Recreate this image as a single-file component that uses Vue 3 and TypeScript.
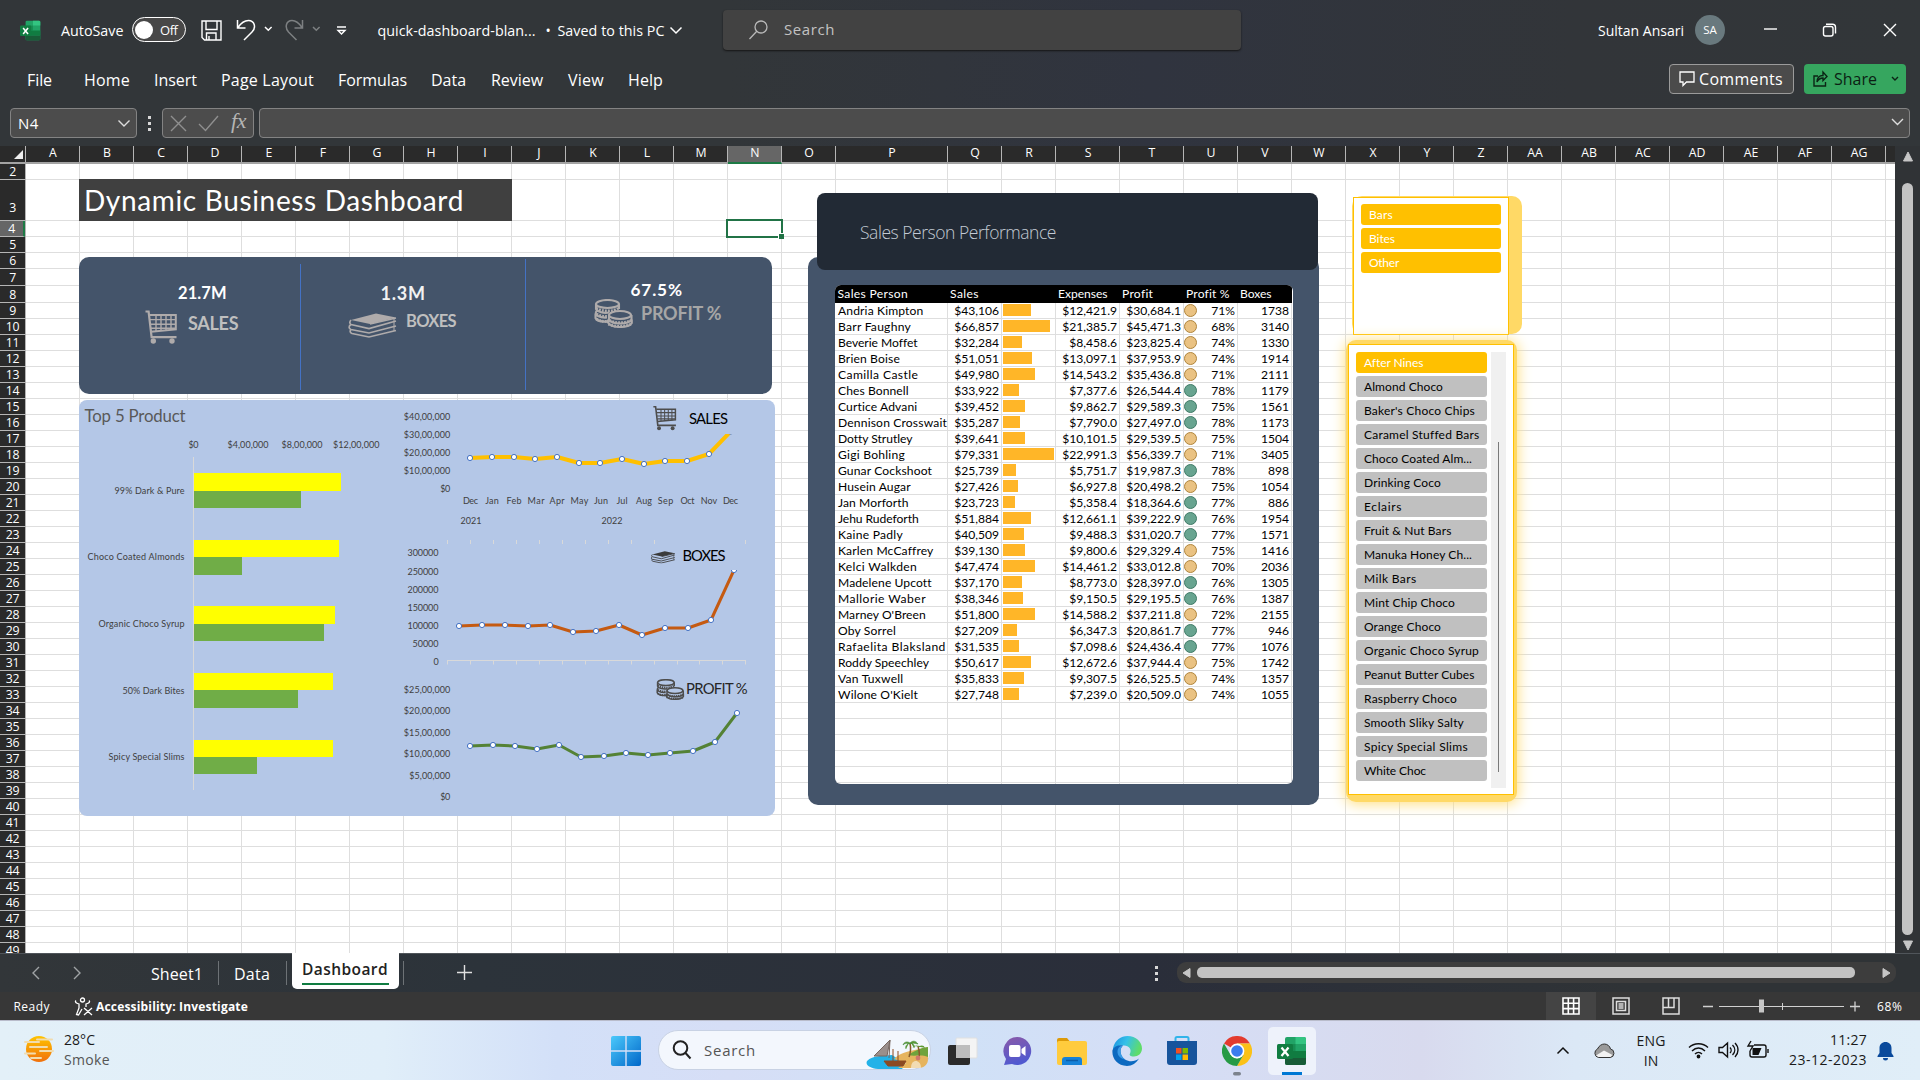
<script setup lang="ts">
type FitEl = HTMLElement

// Spreads the letters of a label so that it takes the given width.
const vFit = {
  mounted(el: FitEl, binding: { value: number }) {
    const count = (el.textContent ?? '').trim().length
    if (!count) return
    const natural = el.getBoundingClientRect().width
    el.style.letterSpacing = `${(binding.value - natural) / count}px`
  },
}

interface Column { name: string; width: number }
const wide: Record<string, number> = { P: 112, S: 64, T: 64 }
const columnNames = 'A B C D E F G H I J K L M N O P Q R S T U V W X Y Z AA AB AC AD AE AF AG'.split(' ')
const columns: Column[] = columnNames.map((name) => ({ name, width: wide[name] ?? 54 }))

const rowHeights: Record<number, number> = { 3: 41, 7: 17, 8: 17, 49: 11 }
const rows = Array.from({ length: 48 }, (_, i) => ({ n: i + 2, height: rowHeights[i + 2] ?? 16 }))

const columnLines: number[] = []
columns.reduce((x, c) => { columnLines.push(x + c.width - 0.5); return x + c.width }, 26)
const rowLines: number[] = []
rows.slice(0, -1).reduce((y, r) => { rowLines.push(y + r.height - 0.5); return y + r.height }, 18)

const menus: [string, number, number][] = [
  ['File', 25, 0], ['Home', 46, 32], ['Insert', 43, 24], ['Page Layout', 93, 24], ['Formulas', 69, 24],
  ['Data', 35, 24], ['Review', 52, 25], ['View', 36, 25], ['Help', 35, 24],
]

interface Person {
  name: string; w: number; sales: string; bar: number; expenses: string; profit: string; pct: number; boxes: number; good: boolean
}
const people: Person[] = ([
  ['Andria Kimpton', 85.4, '$43,106', 28, '$12,421.9', '$30,684.1', 71, 1738, 0],
  ['Barr Faughny', 73, '$66,857', 47, '$21,385.7', '$45,471.3', 68, 3140, 0],
  ['Beverie Moffet', 79.2, '$32,284', 19, '$8,458.6', '$23,825.4', 74, 1330, 0],
  ['Brien Boise', 62, '$51,051', 29, '$13,097.1', '$37,953.9', 74, 1914, 0],
  ['Camilla Castle', 80.2, '$49,980', 32, '$14,543.2', '$35,436.8', 71, 2111, 0],
  ['Ches Bonnell', 70.6, '$33,922', 16, '$7,377.6', '$26,544.4', 78, 1179, 1],
  ['Curtice Advani', 79.5, '$39,452', 22, '$9,862.7', '$29,589.3', 75, 1561, 1],
  ['Dennison Crosswait', 109, '$35,287', 17, '$7,790.0', '$27,497.0', 78, 1173, 1],
  ['Dotty Strutley', 74, '$39,641', 22, '$10,101.5', '$29,539.5', 75, 1504, 0],
  ['Gigi Bohling', 67, '$79,331', 51, '$22,991.3', '$56,339.7', 71, 3405, 0],
  ['Gunar Cockshoot', 94, '$25,739', 13, '$5,751.7', '$19,987.3', 78, 898, 1],
  ['Husein Augar', 72.7, '$27,426', 15, '$6,927.8', '$20,498.2', 75, 1054, 0],
  ['Jan Morforth', 70.6, '$23,723', 12, '$5,358.4', '$18,364.6', 77, 886, 1],
  ['Jehu Rudeforth', 80.6, '$51,884', 28, '$12,661.1', '$39,222.9', 76, 1954, 1],
  ['Kaine Padly', 65, '$40,509', 21, '$9,488.3', '$31,020.7', 77, 1571, 1],
  ['Karlen McCaffrey', 95, '$39,130', 22, '$9,800.6', '$29,329.4', 75, 1416, 0],
  ['Kelci Walkden', 79, '$47,474', 32, '$14,461.2', '$33,012.8', 70, 2036, 0],
  ['Madelene Upcott', 93.3, '$37,170', 19, '$8,773.0', '$28,397.0', 76, 1305, 1],
  ['Mallorie Waber', 88, '$38,346', 20, '$9,150.5', '$29,195.5', 76, 1387, 1],
  ["Marney O'Breen", 87.8, '$51,800', 32, '$14,588.2', '$37,211.8', 72, 2155, 0],
  ['Oby Sorrel', 58, '$27,209', 14, '$6,347.3', '$20,861.7', 77, 946, 1],
  ['Rafaelita Blaksland', 107.8, '$31,535', 16, '$7,098.6', '$24,436.4', 77, 1076, 1],
  ['Roddy Speechley', 91, '$50,617', 28, '$12,672.6', '$37,944.4', 75, 1742, 0],
  ['Van Tuxwell', 65.4, '$35,833', 21, '$9,307.5', '$26,525.5', 74, 1357, 0],
  ["Wilone O'Kielt", 80, '$27,748', 16, '$7,239.0', '$20,509.0', 74, 1055, 0],
] as [string, number, string, number, string, string, number, number, number][]).map(
  ([name, w, sales, bar, expenses, profit, pct, boxes, good]) => ({ name, w, sales, bar, expenses, profit, pct, boxes, good: !!good }),
)

const categories: [string, number][] = [['Bars', 24], ['Bites', 26], ['Other', 30]]
const products: [string, number][] = [
  ['After Nines', 59], ['Almond Choco', 79], ["Baker's Choco Chips", 111], ['Caramel Stuffed Bars', 115],
  ['Choco Coated Alm...', 108], ['Drinking Coco', 77], ['Eclairs', 38], ['Fruit & Nut Bars', 87.5],
  ['Manuka Honey Ch...', 108], ['Milk Bars', 52.5], ['Mint Chip Choco', 91], ['Orange Choco', 77],
  ['Organic Choco Syrup', 115], ['Peanut Butter Cubes', 110], ['Raspberry Choco', 93],
  ['Smooth Sliky Salty', 100], ['Spicy Special Slims', 104], ['White Choc', 62],
]

const topProducts = [
  { label: '99% Dark & Pure', w: 70, base: 494, y: 473, mid: 491, end: 508, a: 147, b: 107 },
  { label: 'Choco Coated Almonds', w: 97, base: 560, y: 540, mid: 557, end: 575, a: 145, b: 48 },
  { label: 'Organic Choco Syrup', w: 86, base: 627, y: 606, mid: 624, end: 641, a: 141, b: 130 },
  { label: '50% Dark Bites', w: 62, base: 694, y: 673, mid: 690, end: 708, a: 139, b: 104 },
  { label: 'Spicy Special Slims', w: 76, base: 760, y: 740, mid: 757, end: 774, a: 139, b: 63 },
]
const moneyAxis: [string, number, number][] = [['$0', 188.5, 10], ['$4,00,000', 227.5, 41], ['$8,00,000', 281.5, 41], ['$12,00,000', 333, 46.5]]

interface AxisLabel { t: string; x: number; y: number; w: number }
const axis = (items: [string, number, number][], right: number): AxisLabel[] =>
  items.map(([t, y, w]) => ({ t, x: right - w, y: y + 3.6, w }))
const axisLabels: AxisLabel[] = [
  ...axis([['$40,00,000', 416, 46.5], ['$30,00,000', 434, 46.5], ['$20,00,000', 452, 46.5], ['$10,00,000', 470, 46.5], ['$0', 488, 10]], 450.3),
  ...axis([['300000', 552, 31], ['250000', 571, 31], ['200000', 589, 31], ['150000', 607, 31], ['100000', 625, 31], ['50000', 643, 26], ['0', 661, 5]], 438.5),
  ...axis([['$25,00,000', 689, 46.5], ['$20,00,000', 710, 46.5], ['$15,00,000', 732, 46.5], ['$10,00,000', 753, 46.5], ['$5,00,000', 775, 41], ['$0', 796, 10]], 450.3),
]
const months: [string, number, number][] = [
  ['Dec', 470.5, 15], ['Jan', 492, 13.5], ['Feb', 514, 15], ['Mar', 536, 17], ['Apr', 557, 15], ['May', 579.5, 18], ['Jun', 601, 14],
  ['Jul', 622, 11], ['Aug', 644, 16], ['Sep', 665.5, 15.5], ['Oct', 687.5, 14], ['Nov', 709, 16.5], ['Dec', 730.5, 15],
]

type Point = [number, number]
interface Series { color: string; width: number; clip: string; points: Point[] }
const series: Series[] = [
  { color: '#ffc000', width: 4, clip: 'url(#clip-sales)', points: [[470, 458], [492, 457], [514, 457], [535, 459], [557, 457], [579, 463], [600, 463], [622, 459], [644, 464], [665, 461], [687, 461], [709, 454], [730.5, 431.6]] },
  { color: '#c55a11', width: 3, clip: 'url(#clip-boxes)', points: [[459, 626], [482, 625], [505, 625], [528, 626], [550, 625], [573, 632], [596, 631], [619, 625], [642, 635], [665, 628], [688, 628], [711, 620], [734, 570]] },
  { color: '#548235', width: 3, clip: 'url(#clip-profit)', points: [[470, 746], [493, 745], [515, 746], [537, 749], [559, 745], [581, 757], [604, 756], [626, 753], [648, 755], [670, 753], [693, 751], [715, 742], [737, 713]] },
]
const pts = (s: Series): string => s.points.map((p) => p.join(',')).join(' ')
const boxTicks = [447.5, 470.5, 493.5, 516.5, 539.5, 562.5, 585.5, 608.5, 631.5, 654.5, 677.5, 699.5, 722.5, 745.5]
const topTicks = boxTicks.filter((_, i) => i < 10 || i === 13)
</script>

<template>
  <div class="screen">
    <svg class="defs" width="0" height="0" aria-hidden="true">
      <defs>
        <symbol id="cart" viewBox="0 0 33 34">
          <g fill="none" stroke="currentColor">
            <path d="M.5 1.5H3.6L6.6 27.2H31.5" stroke-width="2.2" />
            <path d="M4.6 5H30.8V19.4L6 21.8" stroke-width="2" />
            <path d="M5 9.6H31M5.5 14.2H31M6 18.2H31M11 5v16M16 5v15.6M21 5v15.2M26 5v15" stroke-width="1.4" />
          </g>
          <circle cx="8.3" cy="31" r="2.7" fill="currentColor" /><circle cx="27" cy="31" r="2.7" fill="currentColor" />
        </symbol>
        <symbol id="books" viewBox="0 0 49 25">
          <path d="M3 7 28 .5 48 4.5 22 11z" fill="currentColor" />
          <g fill="none" stroke="currentColor" stroke-width="1.7">
            <path d="M3 7C1.400 8.500 1.500 10.500 3 11.500L21 15.500 48 8M22 11l26-6M3 11.500C.5 13 .5 15.500 3 16.500L21 20 48 13M3 16.500C1.500 18 2 19.500 4 20.500L21 24 48 17.500" />
            <path d="M46 5v3M46 9v4.500M46 14v4" stroke-width="1" />
          </g>
        </symbol>
        <symbol id="coins" viewBox="0 0 38 29">
          <g fill="none" stroke="currentColor" stroke-width="2.1">
            <ellipse cx="13" cy="5" rx="11.500" ry="4" />
            <path d="M1.500 5v5c1.500 3 8 4.500 13 3.500M24.500 5v5M2.500 11.500c-2 2-1.500 4 1 5.500 3 1.500 6 1.800 9 1.500M1 14.500v4.500c1 2.500 6 4 12 3.500" />
            <ellipse cx="25.500" cy="16" rx="11" ry="4" />
            <path d="M14.500 16v4.500c2 3.500 8 4 11 4s9.500-.5 11.500-4V16M13.500 20.500v3c2 3.500 8 4.500 12 4.500s10-.8 11.800-4v-3.500" />
          </g>
          <g fill="none" stroke="currentColor" stroke-dasharray="1.800 1.200">
            <path d="M2 9c5 4 18 4 22 0M2 20c3 2 6 2.500 11 2.500M2 15c3 2 7 2.500 11 2.500" stroke-width="2.800" />
            <path d="M15 21.500c5 3 16 3 21.500 0M14 25c5 3 18 3 23 0" stroke-width="2.800" />
          </g>
        </symbol>
        <symbol id="excel" viewBox="0 0 30 30">
          <rect x="8" y="1" width="21" height="28" rx="2" fill="#21a366" />
          <path d="M18.500 1H27a2 2 0 0 1 2 2v5H18.500z" fill="#33c481" />
          <path d="M8 8h10.500v7H8z" fill="#107c41" opacity=".55" /><path d="M8 15h21v7H8z" fill="#107c41" />
          <path d="M8 22h21v5a2 2 0 0 1-2 2H10a2 2 0 0 1-2-2z" fill="#185c37" />
          <rect x="0" y="8" width="16" height="15" rx="1.500" fill="#107c41" />
          <path d="M4.500 11.500l7 8.500M11.500 11.500l-7 8.500" stroke="#fff" stroke-width="2.200" />
        </symbol>
      </defs>
    </svg>

    <div class="chrome">
      <header class="titlebar">
        <div class="group quick">
          <svg class="logo" width="21" height="21"><use href="#excel" width="21" height="21" /></svg>
          <span v-fit="62.500" class="t autosave">AutoSave</span>
          <span class="toggle"><i class="knob" /><span v-fit="17.500" class="t off">Off</span></span>
          <svg class="save" width="21" height="21" viewBox="0 0 21 21" fill="none" stroke="#fff" stroke-width="1.400"><path d="M1 1h19v19H3.500L1 17.500zM5 1v8.500h11V1M5.500 20v-7H15v7M8 16v4" /></svg>
          <svg class="undo" width="38" height="24" viewBox="0 0 38 24" fill="none" stroke="#fff" stroke-width="1.500"><path d="M1.500 2v8h8M2 9.500C5 5 9 2.500 12.500 2.500c6 0 8 7 3.500 11.500l-8 8" /><path d="M29 9l3.300 3.300L35.600 9" /></svg>
          <svg class="redo" width="38" height="24" viewBox="0 0 38 24" fill="none" stroke="#7d8082" stroke-width="1.500"><path d="M17.500 2v8h-8M17 9.500C14 5 10 2.500 7 2.500c-6 0-7.500 7-3.500 11.500l8 8" /><path d="M28 9l3.300 3.300L34.600 9" /></svg>
          <svg class="custom" width="11" height="12" viewBox="0 0 11 12" fill="none" stroke="#fff" stroke-width="1.400"><path d="M1 2h9M2 5.500h7L5.500 9z" /></svg>
          <span v-fit="158" class="t fname">quick-dashboard-blan...</span>
          <span class="t bullet">•</span>
          <span v-fit="107" class="t saved">Saved to this PC</span>
          <svg class="savedchev" width="14" height="9" viewBox="0 0 14 9" fill="none" stroke="#fff" stroke-width="1.500"><path d="M1.500 1.500 7 7l5.500-5.500" /></svg>
        </div>
        <div class="tsearch">
          <svg width="22" height="22" viewBox="0 0 22 22" fill="none" stroke="#b9b9b9" stroke-width="1.300"><circle cx="13" cy="8" r="6" /><path d="M8.800 12.300 1.500 20" /></svg>
          <span v-fit="51" class="t">Search</span>
        </div>
        <div class="group user">
          <span v-fit="86" class="t">Sultan Ansari</span>
          <span class="avatar">SA</span>
          <svg class="win" width="136" height="16" viewBox="0 0 136 16" fill="none" stroke="#fff" stroke-width="1.400"><path d="M1 7h13" /><rect x="60.500" y="4.500" width="9.500" height="9.500" rx="2" /><path d="M63 2.200h6.500a3 3 0 0 1 3 3V11.500M121 2l12 12M133 2l-12 12" /></svg>
        </div>
      </header>

      <nav class="ribbon">
        <span v-for="[name, w, gap] in menus" :key="name" v-fit="w" class="t menu" :style="{ marginLeft: gap + 'px' }">{{ name }}</span>
        <button class="btn comments">
          <svg width="16" height="17" viewBox="0 0 16 17" fill="none" stroke="#fff" stroke-width="1.300"><path d="M1 2h14v10H7.500L4 15.500V12H1z" /></svg>
          <span v-fit="84" class="t">Comments</span>
        </button>
        <button class="btn share">
          <svg width="15" height="17" viewBox="0 0 15 17" fill="none" stroke="#0b2415" stroke-width="1.400"><path d="M5 6H1v10h11.500v-4M4 12c0-4 2-6.500 6-6.500V2l4 4.500-4 4V8c-3 0-4.500 1-6 4z" /></svg>
          <span v-fit="43" class="t">Share</span>
          <svg class="sc" width="8" height="6" viewBox="0 0 8 6" fill="none" stroke="#0b2415" stroke-width="1.400"><path d="M1 1l3 3 3-3" /></svg>
        </button>
      </nav>

      <div class="formula">
        <div class="fbox namebox"><span v-fit="21" class="t">N4</span><svg width="14" height="9" viewBox="0 0 14 9" fill="none" stroke="#ddd" stroke-width="1.400"><path d="M1.500 1.500 7 7l5.500-5.500" /></svg></div>
        <span class="dots"><i /><i /><i /></span>
        <div class="fbox fx">
          <svg width="92" height="28" viewBox="0 0 92 28" fill="none" stroke="#8f8f8f" stroke-width="1.400"><path d="M8 7l15 15M23 7 8 22M36 15l6.500 6.500L55 7" /></svg>
          <span class="fxt">fx</span>
        </div>
        <div class="fbox finput"><svg width="13" height="8" viewBox="0 0 13 8" fill="none" stroke="#ddd" stroke-width="1.400"><path d="M1 1l5.500 5.500L12 1" /></svg></div>
      </div>
    </div>

    <main class="sheet">
      <div class="colhead">
        <span class="corner"><svg width="9" height="9"><path d="M9 0v9H0z" fill="#eee" /></svg></span>
        <span v-for="c in columns" :key="c.name" class="col" :class="{ on: c.name === 'N' }" :style="{ width: c.width + 'px' }">{{ c.name }}</span>
      </div>
      <div class="rowhead">
        <span v-for="r in rows" :key="r.n" class="row" :class="{ on: r.n === 4 }" :style="{ height: r.height + 'px' }"><b>{{ r.n }}</b></span>
      </div>
      <svg class="lines" width="1895" height="807" viewBox="0 0 1895 807" stroke="#dedede">
        <line v-for="x in columnLines" :key="'c' + x" :x1="x" :x2="x" y1="18" y2="807" />
        <line v-for="y in rowLines" :key="'r' + y" x1="26" x2="1895" :y1="y" :y2="y" />
      </svg>

      <h1 class="title"><span v-fit="380">Dynamic Business Dashboard</span></h1>
      <div class="selected"><i /></div>

      <svg class="kpis" width="693" height="137" viewBox="79 257 693 137">
        <rect x="79" y="257" width="693" height="137" rx="10" fill="#44546a" />
        <path d="M300.500 264v126M525.500 259v131" stroke="#4472c4" />
        <g font-weight="700" fill="#fff">
          <text x="178" y="299.300" font-size="16.500" textLength="48.500">21.7M</text>
          <text x="380.500" y="300" font-size="18" textLength="44.500" fill="#f2f2f2">1.3M</text>
          <text x="630.500" y="296.300" font-size="17.200" textLength="51.500">67.5%</text>
          <text x="188" y="330" font-size="18" textLength="50.500" fill="#bfbfbf">SALES</text>
          <text x="406" y="327.300" font-size="16.500" textLength="50.500" fill="#bfbfbf">BOXES</text>
          <text x="641" y="320" font-size="18" textLength="80.500" fill="#a6a6a6">PROFIT %</text>
        </g>
        <g color="#afabab">
          <use href="#cart" x="145" y="310" width="33" height="34" />
          <use href="#books" x="348" y="313" width="49" height="25" />
          <use href="#coins" x="594" y="299" width="39" height="29" />
        </g>
      </svg>

      <svg class="charts" width="696" height="416" viewBox="79 400 696 416">
        <defs>
          <clipPath id="clip-sales"><rect x="450" y="434" width="300" height="60" /></clipPath>
          <clipPath id="clip-boxes"><rect x="440" y="570" width="310" height="90" /></clipPath>
          <clipPath id="clip-profit"><rect x="450" y="690" width="300" height="110" /></clipPath>
        </defs>
        <rect x="79" y="400" width="696" height="416" rx="8" fill="#b4c7e7" />
        <text x="84.500" y="422.300" font-size="16.800" textLength="101" fill="#595959">Top 5 Product</text>
        <g font-size="9" fill="#404040">
          <text v-for="[t, x, w] in moneyAxis" :key="t" :x="x" y="447.600" :textLength="w">{{ t }}</text>
          <text v-for="p in topProducts" :key="p.label" :x="184.500 - p.w" :y="p.base" :textLength="p.w">{{ p.label }}</text>
          <text v-for="a in axisLabels" :key="a.t + a.y" :x="a.x" :y="a.y" :textLength="a.w">{{ a.t }}</text>
          <text v-for="[t, x, w] in months" :key="t + x" :x="x - w / 2" y="504" :textLength="w">{{ t }}</text>
          <text x="460.500" y="524" textLength="21">2021</text>
          <text x="601.500" y="524" textLength="21">2022</text>
        </g>
        <path d="M193.500 457v333" stroke="#d9d9d9" />
        <g v-for="p in topProducts" :key="p.y">
          <rect x="194" :y="p.y" :width="p.a" :height="p.mid - p.y" fill="#ffff00" />
          <rect x="194" :y="p.mid" :width="p.b" :height="p.end - p.mid" fill="#70ad47" />
        </g>
        <g stroke="#d9d9d9">
          <path d="M447 660.500h299" />
          <path v-for="x in boxTicks" :key="x" :d="`M${x} 661v3.500`" />
          <path v-for="x in topTicks" :key="'t' + x" :d="`M${x} 540v4`" />
        </g>
        <g v-for="s in series" :key="s.color" :clip-path="s.clip">
          <polyline :points="pts(s)" fill="none" :stroke="s.color" :stroke-width="s.width" stroke-linejoin="round" />
          <circle v-for="p in s.points" :key="p[0]" :cx="p[0]" :cy="p[1]" r="2.600" fill="#fff" stroke="#4472c4" />
        </g>
        <g color="#4d4d4d">
          <use href="#cart" x="653" y="405" width="24" height="26" />
          <use href="#books" x="650" y="551" width="26" height="12.500" color="#3b3b3b" />
          <use href="#coins" x="656" y="679" width="28.500" height="21" />
        </g>
        <g font-size="14.800">
          <text x="689" y="424.300" textLength="39">SALES</text>
          <text x="682.500" y="560.500" textLength="43">BOXES</text>
          <text x="686" y="694.300" textLength="61.500" fill="#262626">PROFIT %</text>
        </g>
      </svg>

      <section class="perf">
        <div class="table">
          <div class="tr th">
            <span class="name"><i v-fit="70.500">Sales Person</i></span><span class="sales"><i v-fit="29">Sales</i></span><span class="exp"><i v-fit="49.500">Expenses</i></span>
            <span class="prof"><i v-fit="31">Profit</i></span><span class="pct"><i v-fit="43.500">Profit %</i></span><span class="box"><i v-fit="31.500">Boxes</i></span>
          </div>
          <div v-for="p in people" :key="p.name" class="tr">
            <span class="name"><i v-fit="p.w">{{ p.name }}</i></span>
            <span class="sales">{{ p.sales }}</span>
            <span class="bar"><em :style="{ width: p.bar + 'px' }" /></span>
            <span class="exp">{{ p.expenses }}</span>
            <span class="prof">{{ p.profit }}</span>
            <span class="pct"><u :class="{ good: p.good }" />{{ p.pct }}%</span>
            <span class="box">{{ p.boxes }}</span>
          </div>
          <div v-for="n in 6" :key="n" class="tr">
            <span class="name" /><span class="sales" /><span class="bar" /><span class="exp" /><span class="prof" /><span class="pct" /><span class="box" />
          </div>
        </div>
      </section>
      <div class="perfhead"><span v-fit="196">Sales Person Performance</span></div>

      <div class="slicerback" />
      <div class="slicer one">
        <span v-for="[t, w] in categories" :key="t" class="opt on"><i v-fit="w">{{ t }}</i></span>
      </div>
      <div class="slicerback glow" />
      <div class="slicer two">
        <div class="opts">
          <span v-for="([t, w], i) in products" :key="t" class="opt" :class="{ on: i === 0 }"><i v-fit="w">{{ t }}</i></span>
        </div>
        <div class="track"><i /></div>
      </div>

      <div class="vscroll">
        <svg width="12" height="11"><path d="M6 1l4.500 9h-9z" fill="#c6c6c6" stroke="#c6c6c6" stroke-linejoin="round" /></svg>
        <i />
        <svg width="12" height="11"><path d="M6 10l4.500-9h-9z" fill="#c6c6c6" stroke="#c6c6c6" stroke-linejoin="round" /></svg>
      </div>
    </main>

    <div class="tabs">
      <svg class="arrows" width="52" height="14" viewBox="0 0 52 14" fill="none" stroke="#a0a4a6" stroke-width="1.400"><path d="M8 1 2 7l6 6M43 1l6 6-6 6" /></svg>
      <span v-fit="52" class="t s1">Sheet1</span><i class="sep a" />
      <span v-fit="36" class="t s2">Data</span><i class="sep b" />
      <span class="active"><span v-fit="86" class="t">Dashboard</span></span><i class="sep c" />
      <svg class="plus" width="15" height="15" stroke="#e0e0e0" stroke-width="1.400"><path d="M7.500 0v15M0 7.500h15" /></svg>
      <span class="dots"><i /><i /><i /></span>
      <div class="hscroll">
        <svg width="9" height="12"><path d="M8 1.500v9L1 6z" fill="#c6c6c6" stroke="#c6c6c6" stroke-linejoin="round" /></svg>
        <i />
        <svg width="9" height="12"><path d="M1 1.500v9L8 6z" fill="#c6c6c6" stroke="#c6c6c6" stroke-linejoin="round" /></svg>
      </div>
    </div>

    <div class="status">
      <span v-fit="36.500" class="t ready">Ready</span>
      <svg class="acc" width="19" height="19" viewBox="0 0 19 19" fill="none" stroke="#fff" stroke-width="1.300"><circle cx="8.500" cy="3" r="2" /><path d="M2 3.500c-1.500 1.500 0 2.500 3 3.500v4l-2.500 6.500 2 .5L8 12M15 3.500c1.500 1.500 0 2.500-3 3.500v3M10 11l8 7M18 11l-8 7" /></svg>
      <span v-fit="152" class="t acct">Accessibility: Investigate</span>
      <span class="views">
        <span class="view on"><svg width="18" height="18" viewBox="0 0 18 18" fill="none" stroke="#fff" stroke-width="1.600"><path d="M1 1h16v16H1zM1 6.300h16M1 11.600h16M6.300 1v16M11.600 1v16" /></svg></span>
        <span class="view"><svg width="18" height="18" viewBox="0 0 18 18" fill="none" stroke="#ddd" stroke-width="1.500"><path d="M1 1h16v16H1zM4.500 4.500h9v9h-9zM6.500 7h5M6.500 9h5M6.500 11h5" /></svg></span>
        <span class="view"><svg width="18" height="18" viewBox="0 0 18 18" fill="none" stroke="#ddd" stroke-width="1.500"><path d="M1 1h16v16H1zM1 10.500h11V1M6.500 1v9.500" /></svg></span>
      </span>
      <svg class="zoom" width="158" height="18" viewBox="0 0 158 18" stroke="#d0d0d0"><path d="M1 9.500h10M148 9.500h10M153 4.500v10" stroke-width="1.300" /><path d="M17 9.500h125M80.500 6v7" /><rect x="57" y="2.500" width="5" height="13" fill="#c6c6c6" stroke="none" /></svg>
      <span v-fit="25.500" class="t pctz">68%</span>
    </div>

    <footer class="taskbar">
      <svg class="weather" width="30" height="30" viewBox="0 0 30 30"><defs><linearGradient id="sun" x1="0" y1="0" x2="0" y2="1"><stop offset="0" stop-color="#ffc400" /><stop offset="1" stop-color="#f0700c" /></linearGradient></defs><circle cx="15" cy="15" r="13" fill="url(#sun)" /><path d="M1 8h14M13 5.500h15M6 13h17M1 19.500h10M16 17h13M7 24h10" stroke="#f1dcae" stroke-width="2" stroke-linecap="round" /></svg>
      <div class="wtext"><span v-fit="31" class="t">28°C</span><span v-fit="46" class="t smoke">Smoke</span></div>
      <svg class="windows" width="30" height="30" viewBox="0 0 30 30"><defs><linearGradient id="win" x1="0" y1="0" x2="1" y2="1"><stop offset="0" stop-color="#4cc9fb" /><stop offset="1" stop-color="#0067c9" /></linearGradient></defs><path d="M2 0h12.300v14.300H0V2a2 2 0 0 1 2-2zM15.700 0H28a2 2 0 0 1 2 2v12.300H15.700zM0 15.700h14.300V30H2a2 2 0 0 1-2-2zM15.700 15.700H30V28a2 2 0 0 1-2 2H15.700z" fill="url(#win)" /></svg>
      <div class="wsearch">
        <svg width="20" height="20" viewBox="0 0 20 20" fill="none" stroke="#222" stroke-width="2"><circle cx="8.500" cy="8" r="6.800" /><path d="M13.500 13l5 5.500" /></svg>
        <span v-fit="52" class="t">Search</span>
        <svg class="beach" width="63" height="32" viewBox="0 0 63 32"><path d="M1 24c6-6 16-5 25-6l14 9-4 5H12C4 31-1 28 1 24z" fill="#22b2e8" /><path d="M28 22c8-8 18-8 34-12v12c0 5-3 8-8 9H32l8-5z" fill="#e6b45e" /><path d="M42 18c6-4 12-7 20-8v10c-7-3-13 0-20-2z" fill="#6fa33c" /><path d="M24 3 8 19h13zM24 3l-1 18" fill="#9a8f8c" stroke="#76665f" /><path d="M18 24h22l-3 5H22zM27 12v12M32 14v10" fill="#8b4a22" stroke="#8b4a22" /><path d="M43 20c2-5 2-9 1-14M53 20c1-4 0-7-1-11" fill="none" stroke="#8a5a2a" stroke-width="1.500" /><path d="M37 8c1-3 4-4 7-2 3-3 6-2 8 1-4-1-5-1-8 0-3-1-5-1-7 1zM43 6c-3 2-4 4-3 6M45 6c3 1 4 3 3 5" fill="#5f9a34" stroke="#3f8a35" stroke-width=".6" /><path d="M46 11c2-3 5-3 7-2 3-1 5-1 6 2-3-1-4-1-6-1-2-1-5-1-7 1z" fill="#5f9a34" /><path d="M45 31c0-6 3-7 5-7s5 2 5 7z" fill="#f2dcb2" /><circle cx="52" cy="21" r="2.400" fill="#d0776b" /></svg>
      </div>
      <div class="apps">
        <svg width="30" height="30" viewBox="0 0 30 30"><rect x="8" y="2" width="21" height="20" rx="1" fill="#f4f4f4" stroke="#e0e0e0" /><rect x="0" y="9" width="22" height="20" rx="2" fill="#2b2b2b" /><path d="M8 9h14v13H8z" fill="#bdbdbd" /></svg>
        <svg width="30" height="30" viewBox="0 0 30 30"><defs><linearGradient id="chat" x1="0" y1="0" x2=".3" y2="1"><stop offset="0" stop-color="#8b5aa8" /><stop offset="1" stop-color="#5059d0" /></linearGradient></defs><path d="M15 1a14 14 0 1 1-5 27l-8 1 2-6A14 14 0 0 1 15 1z" fill="url(#chat)" /><rect x="7" y="9" width="11.500" height="12" rx="2" fill="#fff" /><path d="M19.500 13l4-3v10l-4-3z" fill="#fff" /></svg>
        <svg width="30" height="30" viewBox="0 0 30 30"><path d="M0 4a2 2 0 0 1 2-2h8l3 3.500V12H0z" fill="#dd9a08" /><rect x="0" y="5" width="30" height="24" rx="2" fill="#ffcb3d" /><path d="M5 29v-5a3 3 0 0 1 3-3h14a3 3 0 0 1 3 3v5z" fill="#1581d8" /><path d="M9 24.500h12" stroke="#0b5ca8" stroke-width="1.500" /></svg>
        <svg width="30" height="30" viewBox="0 0 30 30"><defs><linearGradient id="edge" x1="0" y1="0" x2="1" y2=".3"><stop offset="0" stop-color="#1a8fe0" /><stop offset=".5" stop-color="#35c1e8" /><stop offset="1" stop-color="#5fdc6a" /></linearGradient></defs><path d="M1 12C3 4 9 0 15.500 0 24 0 30 6 30 12.500c0 5-4 8-8 8s-5-1.500-4-3c2-4-1-8-6-8C7 9 2 11 1 15z" fill="url(#edge)" /><path d="M.500 14C2 10 7 8.500 11 9.500 7 13 8 20 13 23.500c5 3 10 2 14-1C24.500 27 20 30 15 30 5 30-.500 22 .500 14z" fill="#0c69c0" /><path d="M11 9.500C7 13 8 20 13 23.500 8 23 4 18 6 13c1-2 3-3.500 5-3.500z" fill="#3b9be6" /></svg>
        <svg width="30" height="30" viewBox="0 0 30 30"><path d="M8.500 7V2.500A1.500 1.500 0 0 1 10 1h10a1.500 1.500 0 0 1 1.500 1.500V7" fill="none" stroke="#31b4ea" stroke-width="2" /><path d="M0 5h30v21a3 3 0 0 1-3 3H3a3 3 0 0 1-3-3z" fill="#17549c" /><path d="M9 12h5.500v5.500H9z" fill="#f25022" /><path d="M15.500 12H21v5.500h-5.500z" fill="#7fba00" /><path d="M9 18.500h5.500V24H9z" fill="#00a4ef" /><path d="M15.500 18.500H21V24h-5.500z" fill="#ffb900" /></svg>
        <svg width="30" height="42" viewBox="0 0 30 42"><path d="M15 15 2 7.500A15 15 0 0 1 28 7.500H15z" fill="#e33b2e" /><path d="M28 7.500A15 15 0 0 1 15 30l6.500-11.500L15 7.500z" fill="#fbc116" /><path d="M2 7.500A15 15 0 0 0 15 30l6.500-11.200L15 22.500 8.500 18.700z" fill="#269a45" /><circle cx="15" cy="15" r="7.400" fill="#fff" /><circle cx="15" cy="15" r="5.800" fill="#3b7ded" /><rect x="11" y="36" width="8" height="3.500" rx="1.750" fill="#7c828c" /></svg>
        <span class="xl"><svg width="30" height="30"><use href="#excel" width="30" height="30" /></svg></span>
      </div>
      <div class="tray">
        <svg class="up" width="14" height="9" viewBox="0 0 14 9" fill="none" stroke="#111" stroke-width="1.500"><path d="M1.500 7.500 7 2l5.500 5.500" /></svg>
        <svg class="cloud" width="22" height="16" viewBox="0 0 22 16"><path d="M5.500 14.500a4.500 4.500 0 0 1-1-8.500C6 2.500 9 1 11.500 1S17 3 17.500 6a4.300 4.300 0 0 1-.5 8.500z" fill="#9a9a9a" stroke="#333" /><path d="M3 12.500 11 7.500l8.500 4.500-2 2h-12z" fill="#f2f2f2" /></svg>
        <div class="lang"><span v-fit="29" class="t">ENG</span><span v-fit="14.500" class="t">IN</span></div>
        <svg class="net" width="82" height="20" viewBox="0 0 82 20" fill="none" stroke="#111" stroke-width="1.400"><path d="M1 7.500c5-5 14-5 19 0M4 11c4-4 9-4 13 0M7 14c2-2 5-2 7 0" /><circle cx="10.500" cy="16.500" r="1.200" fill="#111" /><path d="M31 7.500h3.500l5-4.500v14l-5-4.500H31zM42 7.500c1.500 1.500 1.500 4 0 5.500M44.500 5c3 3 3 7 0 10M47 3c4 4 4 10 0 14M66 5h10a2 2 0 0 1 2 2v8a2 2 0 0 1-2 2H64a2 2 0 0 1-2-2v-4M80 9v4" /><path d="M64.500 8v7h6l3-7z" fill="#111" stroke="none" /><path d="M63 1l-3 5h5l-3 5" /></svg>
        <div class="clock"><span v-fit="37" class="t">11:27</span><span v-fit="78" class="t">23-12-2023</span></div>
        <svg class="bell" width="17" height="20" viewBox="0 0 17 20"><path d="M8.500 1C5 1 2.500 3.500 2.500 7v5L.5 15v1h16v-1l-2-3V7c0-3.500-2.500-6-6-6zM6 17h5a2.500 2.500 0 0 1-5 0z" fill="#0a4a9c" /></svg>
      </div>
    </footer>
  </div>
</template>

<style>
html, body { margin: 0; background: #fff; overflow: hidden; }
</style>

<style scoped>
* { box-sizing: border-box; }
.screen { width: 1920px; height: 1080px; display: flex; flex-direction: column; overflow: hidden; font-family: "Open Sans", "Noto Sans", sans-serif; color: #fff; }
.defs { position: absolute; }
.t { display: inline-block; white-space: nowrap; flex: none; }
svg { flex: none; display: block; }

.chrome { height: 146px; background: linear-gradient(90deg, #323639 0%, #323639 38%, #30343f 60%, #323539 82%, #323639 100%); }
.titlebar { height: 60px; display: flex; font-size: 14.3px; }
.group { display: flex; align-items: center; height: 60px; }
.quick { width: 723px; }
.logo { margin-left: 20px; }
.autosave { margin-left: 20px; }
.toggle { width: 54px; height: 25px; margin: -1px 0 0 8px; border: 1.5px solid #fff; border-radius: 13px; background: #484848; display: flex; align-items: center; }
.knob { width: 18px; height: 18px; border-radius: 50%; background: #fff; margin-left: 2.500px; }
.off { font-size: 13px; margin-left: 7px; }
.save { margin-left: 15px; }
.undo { margin-left: 14px; }
.redo { margin-left: 11px; }
.custom { margin-left: 13px; margin-top: 2px; }
.fname { margin-left: 31px; }
.bullet { margin-left: 10px; width: 12px; font-size: 14px; }
.savedchev { margin-left: 4px; }
.tsearch { width: 518px; height: 40px; margin-top: 10px; border-radius: 4px; background: #424242; box-shadow: 0 1px 2px #151515; display: flex; align-items: center; color: #c2c2c2; font-size: 15px; padding-left: 25px; }
.tsearch .t { margin-left: 14px; margin-top: -3px; }
.user { margin-left: 357px; font-size: 14px; }
.avatar { width: 30px; height: 30px; border-radius: 50%; background: #69797e; margin-left: 11px; font-size: 11.5px; text-align: center; line-height: 30px; }
.win { margin-left: 38px; }

.ribbon { height: 48px; display: flex; align-items: center; padding: 0 14px 8px 27px; font-size: 16px; }
.btn { font: inherit; height: 30px; padding: 0; border-radius: 4px; display: flex; align-items: center; margin-top: -3px; }
.comments { width: 125px; margin-left: auto; background: #4b4b4b; border: 1px solid #9b9b9b; color: #fff; padding-left: 9px; }
.comments .t { margin-left: 4px; }
.share { width: 102px; margin-left: 10px; background: #36a65f; border: 0; color: #0b1f13; padding-left: 9px; }
.share .t { margin-left: 6px; }
.sc { margin-left: 14px; }

.formula { display: flex; align-items: center; padding-left: 10px; height: 30px; font-size: 15px; }
.fbox { height: 30px; border: 1px solid #838383; border-radius: 4px; background: #4c4c4c; display: flex; align-items: center; }
.namebox { width: 127px; justify-content: space-between; padding: 0 5px 0 7px; }
.dots { display: flex; flex-direction: column; gap: 3px; width: 3px; }
.dots i { width: 3px; height: 3px; background: #d8d8d8; }
.formula .dots { margin: 0 11px; }
.fx { width: 92px; position: relative; }
.fxt { position: absolute; right: 7px; top: -1px; font: italic 22px "Liberation Serif", serif; color: #b5b5b5; letter-spacing: -.5px; }
.finput { width: 1651px; margin-left: 5px; justify-content: flex-end; padding: 0 5px 3px 0; }

.sheet { position: relative; height: 807px; background: #fff; font-family: Lato, Carlito, sans-serif; }
.colhead { display: flex; height: 18px; width: 1895px; background: #2a2a2a; border-bottom: 2px solid #a3a3a3; font-family: "Open Sans", "Noto Sans", sans-serif; position: relative; z-index: 1; }
.corner { width: 26px; flex: none; border-right: 1px solid #b5b5b5; padding: 4px 0 0 14px; }
.col { flex: none; border-right: 1px solid #b5b5b5; text-align: center; font-size: 12.3px; line-height: 14px; height: 16px; padding-left: 1px; }
.col.on { background: #666; height: 18px; border-bottom: 2px solid #1d7a45; }
.rowhead { width: 26px; background: #2a2a2a; border-right: 1px solid #b5b5b5; height: 789px; overflow: hidden; font-family: "Open Sans", "Noto Sans", sans-serif; }
.row { display: flex; align-items: flex-end; justify-content: center; border-bottom: 1px solid #b5b5b5; overflow: hidden; }
.row:last-child { align-items: flex-start; }
.row b { font-weight: 400; font-size: 12.3px; line-height: 15px; letter-spacing: -.4px; }
.row:nth-child(2) b { line-height: 25px; }
.row.on { background: #666; border-right: 2px solid #1d7a45; }
.lines { position: absolute; left: 0; top: 0; }

.title { position: absolute; left: 79px; top: 33px; width: 433px; height: 42px; margin: 0; background: #404040; font-size: 28px; font-weight: 400; line-height: 43px; padding-left: 5px; white-space: nowrap; }
.title span, .perfhead span { display: inline-block; }
.selected { position: absolute; left: 726px; top: 73px; width: 57px; height: 19px; border: 2px solid #217346; }
.selected i { position: absolute; right: -3px; bottom: -3px; width: 6px; height: 6px; background: #217346; border: 1px solid #fff; border-width: 1px 0 0 1px; }
.kpis { position: absolute; left: 79px; top: 111px; }
.charts { position: absolute; left: 79px; top: 254px; }

.perf { position: absolute; left: 808px; top: 111px; width: 511px; height: 548px; border-radius: 10px; background: #44546a; padding: 28px 26px 21px 27px; }
.perfhead { position: absolute; left: 817px; top: 47px; width: 501px; height: 77px; border-radius: 8px; background: #222a35; color: #c3cad4; font: 300 17.5px/79px "Open Sans", sans-serif; padding-left: 43px; white-space: nowrap; }
.table { height: 499px; background: #fff; border-radius: 6px; overflow: hidden; color: #000; font-size: 12.1px; }
.tr { display: flex; height: 16px; border-bottom: 1px solid #dedede; line-height: 16px; white-space: nowrap; }
.tr span { border-right: 1px solid #dedede; height: 16px; flex: none; text-align: right; padding-right: 2px; position: relative; }
.tr i { font-style: normal; display: inline-block; }
.tr .name { width: 113px; text-align: left; padding: 0 0 0 3px; }
.tr .sales { width: 54px; }
.tr .bar { width: 54px; padding: 1px 0 0 1px; }
.bar em { display: block; height: 12px; background: #ffb628; }
.tr .exp, .tr .prof { width: 64px; }
.tr .pct, .tr .box { width: 54px; }
.pct u { position: absolute; left: 0; top: 1px; width: 13px; height: 13px; border-radius: 50%; background: #eac282; border: 1px solid #b0853c; }
.pct u.good { background: #68a490; border-color: #3f7a66; }
.tr.th { height: 18px; width: 457px; background: #000; color: #fff; border: 0; line-height: 18px; }
.th span { border-color: transparent; text-align: left; padding-left: 2px; }
.tr.th .name { padding-left: 2.500px; }
.tr.th .sales { width: 108px; }

.slicerback { position: absolute; left: 1352px; top: 50px; width: 170px; height: 138px; border-radius: 10px; background: #ffd966; }
.slicerback.glow { left: 1346px; top: 194px; width: 171px; height: 462px; box-shadow: 0 1px 14px 1px #ffdf80; }
.slicer { position: absolute; background: #fff; border: 1px solid #ffc000; font-size: 12px; }
.slicer.one { left: 1353px; top: 51px; width: 156px; height: 138px; padding: 6px 7px; }
.slicer.two { left: 1348px; top: 198px; width: 166px; height: 451px; padding: 7px; display: flex; }
.opts { width: 131px; }
.opt { display: block; height: 21px; margin-bottom: 3px; border-radius: 3px; background: #c0c0c0; color: #000; line-height: 22px; padding-left: 8px; white-space: nowrap; }
.opt i { font-style: normal; display: inline-block; }
.opt.on { background: #ffc000; color: #fff; }
.track { width: 15px; height: 436px; margin-left: 4px; background: #f0f0f0; padding: 90px 0 0 7px; }
.track i { display: block; width: 1px; height: 330px; background: #7a7a7a; }

.vscroll { position: absolute; right: 0; top: 0; width: 25px; height: 807px; background: #303336; display: flex; flex-direction: column; align-items: center; padding-top: 5px; }
.vscroll i { width: 11px; height: 752px; margin: 21px 0 5px; border-radius: 6px; background: #c3c3c3; }

.tabs { height: 39px; background: linear-gradient(90deg, #323639 0%, #2c333a 25%, #2a2e3a 60%, #2f3336 85%); border-top: 1px solid #50555a; display: flex; align-items: center; font-size: 16px; }
.arrows { margin: -1px 0 0 31px; }
.s1 { margin: 1px 0 0 68px; }
.s2 { margin: 1px 0 0 15px; }
.sep { width: 1px; height: 24px; background: #6d7276; }
.sep.a { margin-left: 15px; }
.sep.b { margin-left: 16px; }
.sep.c { margin-left: 4px; }
.active { align-self: flex-start; width: 107px; height: 36px; margin: -1px 0 0 5px; padding-left: 10px; background: #fff; color: #222; border-radius: 0 0 5px 5px; font-weight: 600; line-height: 33px; font-size: 15.5px; background-image: linear-gradient(#107c41, #107c41); background-size: 87px 2px; background-position: 10px 30px; background-repeat: no-repeat; }
.plus { margin: -1px 0 0 53px; }
.tabs .dots { margin-left: 683px; }
.hscroll { width: 719px; height: 21px; margin: -1px 0 0 19px; border-radius: 9px; background: #3d3d3d; display: flex; align-items: center; padding-left: 5px; }
.hscroll i { width: 658px; height: 11px; margin: 0 27px 0 6px; border-radius: 5px; background: #c2c2c2; }

.status { height: 28px; background: #373737; display: flex; align-items: center; font-size: 12px; padding-top: 1px; }
.ready { margin-left: 13.500px; }
.acc { margin-left: 24px; }
.acct { margin-left: 3px; font-weight: 700; }
.views { display: flex; margin: -1px 0 0 1298px; height: 28px; }
.view { width: 50px; display: flex; align-items: center; justify-content: center; }
.view.on { background: #444; }
.zoom { margin: -1px 0 0 6px; }
.pctz { margin-left: 17px; }

.taskbar { height: 60px; position: relative; background: linear-gradient(90deg, #e3f0f8 0%, #e0eef9 20%, #d3e0f8 29%, #d6def6 38%, #d0e1f7 50%, #d5def6 60%, #d8daee 74%, #dbe8f6 82%, #e0eef8 100%); border-top: 1px solid #b9bccb; display: flex; align-items: center; color: #1a1a1a; font-size: 14px; }
.weather { margin: -3px 0 0 24px; }
.wtext { display: flex; flex-direction: column; align-items: flex-start; margin-left: 10px; width: 60px; margin-top: -1px; }
.wtext .t, .lang .t, .clock .t { line-height: 20px; }
.smoke { color: #555; }
.windows { margin: 0 0 0 487px; }
.wsearch { width: 273px; height: 40px; margin: -2px 0 0 17px; border-radius: 20px; background: #f3f7fd; border: 1px solid #c8d2e4; display: flex; align-items: center; color: #555; font-size: 15px; padding-left: 13px; }
.wsearch .t { margin-left: 12px; }
.beach { margin: 6px 0 0 110px; }
.apps { display: flex; align-items: center; margin-left: 17px; gap: 25px; height: 59px; }
.apps > svg:nth-child(2) { margin-left: -1px; }
.apps > svg:nth-child(6) { margin-top: 12px; }
.xl { width: 48px; height: 48px; margin-left: -9px; background: #eef2fb; border-radius: 5px; display: flex; align-items: center; justify-content: center; background-image: linear-gradient(#0078d4, #0078d4); background-size: 20px 3px; background-position: 14px 45px; background-repeat: no-repeat; }
.tray { position: relative; display: flex; align-items: center; margin-left: auto; padding-right: 26px; }
.cloud { margin-left: 23px; }
.tray .up { margin-left: 0; }
.lang { display: flex; flex-direction: column; align-items: center; margin-left: 21px; width: 30px; }
.net { margin: -2px 0 0 22px; }
.clock { display: flex; flex-direction: column; align-items: flex-end; margin-left: 17px; width: 80px; margin-top: -1px; }
.bell { margin-left: 10px; }
</style>
